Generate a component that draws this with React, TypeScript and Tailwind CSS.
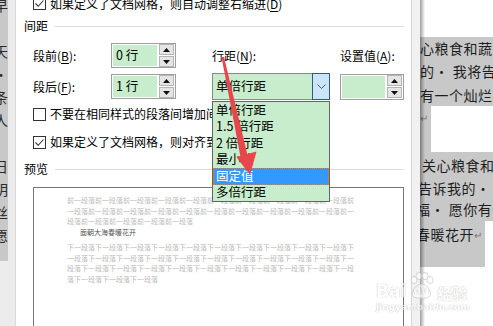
import React from "react";

const font = "font-['Noto_Sans_CJK_SC','Noto_Sans',sans-serif]";

const Check = ({ checked }: { checked?: boolean }) => (
  <div className="w-[13px] h-[13px] shrink-0 border border-[#333] bg-white flex items-center justify-center">
    {checked && (
      <svg width="11" height="11" viewBox="0 0 11 11">
        <polyline points="1.5,5.5 4.2,8.3 9.5,2.5" fill="none" stroke="#333" strokeWidth="1.1" />
      </svg>
    )}
  </div>
);

const Spinner = () => (
  <div className="flex flex-col gap-px w-[15px] shrink-0">
    <div className="h-[11px] bg-[#e5e5e5] border border-[#b5b5b5] flex items-center justify-center">
      <svg width="7" height="4" viewBox="0 0 7 4">
        <polygon points="0,4 7,4 3.5,0" fill="#111" />
      </svg>
    </div>
    <div className="h-[11px] bg-[#e5e5e5] border border-[#b5b5b5] flex items-center justify-center">
      <svg width="7" height="4" viewBox="0 0 7 4">
        <polygon points="0,0 7,0 3.5,4" fill="#111" />
      </svg>
    </div>
  </div>
);

const SpinInput = ({ value, h }: { value: string; h: string }) => (
  <div className={`w-[65px] ${h} border border-[#9f9f9f] bg-white flex items-center gap-[2px] px-px`}>
    <div className="flex-1 self-stretch my-px bg-[#c7edcc] flex items-center pl-[3px] text-[12.5px]">
      {value}
    </div>
    <Spinner />
  </div>
);

const Section = ({ title }: { title: string }) => (
  <div className="h-[14px] flex items-center gap-[7px] pl-[8px] pr-[7px]">
    <span className="text-[12px]">{title}</span>
    <div className="flex-1 h-px bg-[#dcdcdc]" />
  </div>
);

const u = (c: string) => <span className="underline underline-offset-2">{c}</span>;

const leftDoc = ["早", "", "天", "·", "条", "人", "", "·日", "明", "·丝", "愿"];

const options = ["单倍行距", "1.5\u00a0倍行距", "2\u00a0倍行距", "最小值", "固定值", "多倍行距"];

const prevLines = [
  "前一段落前一段落前一段落前一段落前一段落前一段落前一段落前一段落前一段落前一段落前",
  "一段落前一段落前一段落前一段落前一段落前一段落前一段落前一段落前一段落前一段落前一",
  "段落前一段落前一段落前一段落前一段落",
];
const nextLines = [
  "下一段落下一段落下一段落下一段落下一段落下一段落下一段落下一段落下一段落下一段落下",
  "一段落下一段落下一段落下一段落下一段落下一段落下一段落下一段落下一段落下一段落下一",
  "段落下一段落下一段落下一段落下一段落下一段落下一段落下一段落下一段落下一段落下一段",
  "落下一段落下一段落下一段落",
];

export default function App() {
  return (
    <div className={`relative w-[493px] h-[326px] overflow-hidden bg-white flex text-black ${font}`}>
      {/* document peeking out on the left */}
      <div className="w-[16px] shrink-0 flex">
        <div className="w-[8px] flex flex-col">
          <div className="h-[267px] bg-[#c8c8c8] flex flex-col -mt-[6px] overflow-hidden">
            {leftDoc.map((t, i) => (
              <div key={i} className="h-[23px] shrink-0 flex justify-end items-center overflow-hidden text-[14px] text-[#2a2a2a] whitespace-nowrap">
                {t}
              </div>
            ))}
          </div>
          <div className="flex-1 bg-[#ececec]" />
        </div>
        <div className="w-[8px] bg-[#ebebeb] border-r border-[#d9d9d9]" />
      </div>

      {/* dialog */}
      <div className="w-[396px] shrink-0 bg-white border-r border-[#d6d6d6] overflow-hidden flex flex-col">
        <div className="h-[13px] -mt-[3px] shrink-0 pl-[17px] flex items-center gap-[4px] text-[12px] whitespace-nowrap">
          <Check checked />
          <span>如果定义了文档网格，则自动调整右缩进({u("D")})</span>
        </div>

        <div className="mt-[9px]">
          <Section title="间距" />
        </div>

        <div className="mt-[10px] h-[25px] pl-[17px] flex items-center text-[12px]">
          <div className="w-[78px]">段前({u("B")}):</div>
          <SpinInput value="0 行" h="h-[25px]" />
          <div className="w-[36px]" />
          <div className="w-[118px]">行距({u("N")}):</div>
          <div className="w-[10px]" />
          <div className="w-[64px] whitespace-nowrap">设置值({u("A")}):</div>
        </div>

        <div className="mt-[5px] h-[27px] pl-[17px] flex items-center text-[12px]">
          <div className="w-[78px]">段后({u("F")}):</div>
          <SpinInput value="1 行" h="h-[25px]" />
          <div className="w-[36px]" />
          <div className="w-[118px] h-[27px] border border-[#8a8a8a] bg-[#c7edcc] flex items-stretch">
            <div className="flex-1 flex items-center pl-[3px] text-[12.5px]">单倍行距</div>
            <div className="w-[18px] -my-px -mr-px bg-[#cce4f7] border border-[#2a5d8a] flex items-center justify-center">
              <svg width="9" height="5" viewBox="0 0 9 5">
                <polyline points="0.5,0.5 4.5,4.5 8.5,0.5" fill="none" stroke="#4a5a6a" strokeWidth="1" />
              </svg>
            </div>
          </div>
          <div className="w-[10px]" />
          <div className="w-[64px] h-[26px] border border-[#9f9f9f] bg-white flex items-center gap-[2px] px-px">
            <div className="flex-1 self-stretch my-px bg-[#c7edcc]" />
            <Spinner />
          </div>
        </div>

        <div className="mt-[7px] h-[14px] pl-[17px] flex items-center gap-[4px] text-[12px] whitespace-nowrap">
          <Check />
          <span>不要在相同样式的段落间增加间距</span>
        </div>
        <div className="mt-[14px] h-[14px] pl-[17px] flex items-center gap-[4px] text-[12px] whitespace-nowrap">
          <Check checked />
          <span>如果定义了文档网格，则对齐到网格</span>
        </div>

        <div className="mt-[13px]">
          <Section title="预览" />
        </div>

        <div className="mt-[11px] ml-[17px] w-[371px] h-[160px] shrink-0 border border-[#767676] bg-white pl-[33px] pt-[7px] text-[7px] leading-[10.5px] whitespace-nowrap">
          <div className="text-[#bdbdbd]">
            {prevLines.map((l, i) => (
              <div key={i}>{l}</div>
            ))}
          </div>
          <div className="pl-[13px] text-[#555]">面朝大海春暖花开</div>
          <div className="mt-[5px] text-[#bdbdbd]">
            {nextLines.map((l, i) => (
              <div key={i}>{l}</div>
            ))}
          </div>
        </div>
      </div>

      {/* document on the right */}
      <div className="flex-1 flex">
        <div className="w-[8px] bg-[#f1f1f1]" />
        <div className="relative flex-1 overflow-hidden text-[14px] tracking-[0.5px] text-[#1e1e1e] whitespace-nowrap">
          <div className="h-[37px]" />
          <div className="bg-[#c8c8c8]">
            <div className="h-[23px] flex items-center">心粮食和蔬</div>
            <div className="h-[23px] flex items-center">的·&nbsp;我将告诉</div>
            <div className="h-[23px] flex items-center pt-[2px]">有一个灿烂</div>
          </div>
          <div className="h-[46px] flex">
            <div className="w-[11px] bg-[#c8c8c8] text-[10px] text-[#777] pt-[4px]">↵</div>
          </div>
          <div className="bg-[#c8c8c8]">
            <div className="h-[23px] flex items-center pt-[3px] pl-[2px]">关心粮食和</div>
            <div className="h-[23px] flex items-center pt-[4px] -ml-[2px]">告诉我的·&nbsp;我</div>
            <div className="h-[23px] flex items-center -ml-[4px]">福·&nbsp;愿你有一</div>
          </div>
          <div className="w-[65px] h-[46px] bg-[#c8c8c8]">
            <div className="h-[23px] flex items-center pt-[4px] -ml-[4px]">
              春暖花开<span className="text-[10px] text-[#777]">↵</span>
            </div>
          </div>
          <div className="absolute left-0 top-0 h-full w-[5px] bg-[linear-gradient(to_right,rgba(0,0,0,0.38),rgba(0,0,0,0))]" />
        </div>
      </div>

      {/* open dropdown list */}
      <div className="absolute left-[212px] top-[101px] w-[118px] border border-[#646464] bg-[#c7edcc] text-[12.5px]">
        {options.map((o) => (
          <div
            key={o}
            className={
              o === "固定值"
                ? "h-[16.5px] flex items-center pl-[2px] bg-[#3399ff] text-white border border-dotted border-[#d9822b]"
                : "h-[16.5px] flex items-center pl-[3px]"
            }
          >
            {o}
          </div>
        ))}
      </div>

      {/* baidu watermark */}
      <div className="absolute left-[376px] top-[272px] flex flex-col items-start opacity-60 pointer-events-none">
        <div className="flex items-end gap-[2px] text-white font-['DejaVu_Sans',sans-serif] font-bold [text-shadow:0_0_1px_#a8a8a8,0_0_1px_#a8a8a8]">
          <span className="text-[17px] leading-none">Bai</span>
          <div className="relative w-[27px] h-[28px]">
            <svg width="27" height="28" viewBox="0 0 27 28" className="absolute left-0 top-0">
              <g fill="#fff" stroke="#b5b5b5" strokeWidth="0.8">
                <ellipse cx="6" cy="8" rx="3" ry="3.6" />
                <ellipse cx="11" cy="4" rx="3" ry="3.6" />
                <ellipse cx="17" cy="4" rx="3" ry="3.6" />
                <ellipse cx="22" cy="8" rx="3" ry="3.6" />
                <path d="M5 24 C3 18 9 12 13.5 12 C18 12 24 18 22 24 C20 27 7 27 5 24 Z" />
              </g>
            </svg>
            <span className="absolute left-[5px] top-[13px] text-[11px] leading-none text-white">du</span>
          </div>
          <span className={`text-[15px] leading-none ${font}`}>经验</span>
        </div>
        <div className="mt-[3px] text-[9px] leading-none text-white font-['DejaVu_Sans',sans-serif] font-bold [text-shadow:0_0_1px_#aaa,0_0_1px_#aaa]">
          jingyan.baidu.com
        </div>
      </div>

      {/* red arrow */}
      <svg className="absolute left-0 top-0 pointer-events-none" width="493" height="326" viewBox="0 0 493 326">
        <polygon points="221.5,57 224,57 247.5,155 240.5,157" fill="#e8464b" />
        <polygon points="236.5,157 256.5,151.5 250,175" fill="#e8464b" />
      </svg>
    </div>
  );
}
